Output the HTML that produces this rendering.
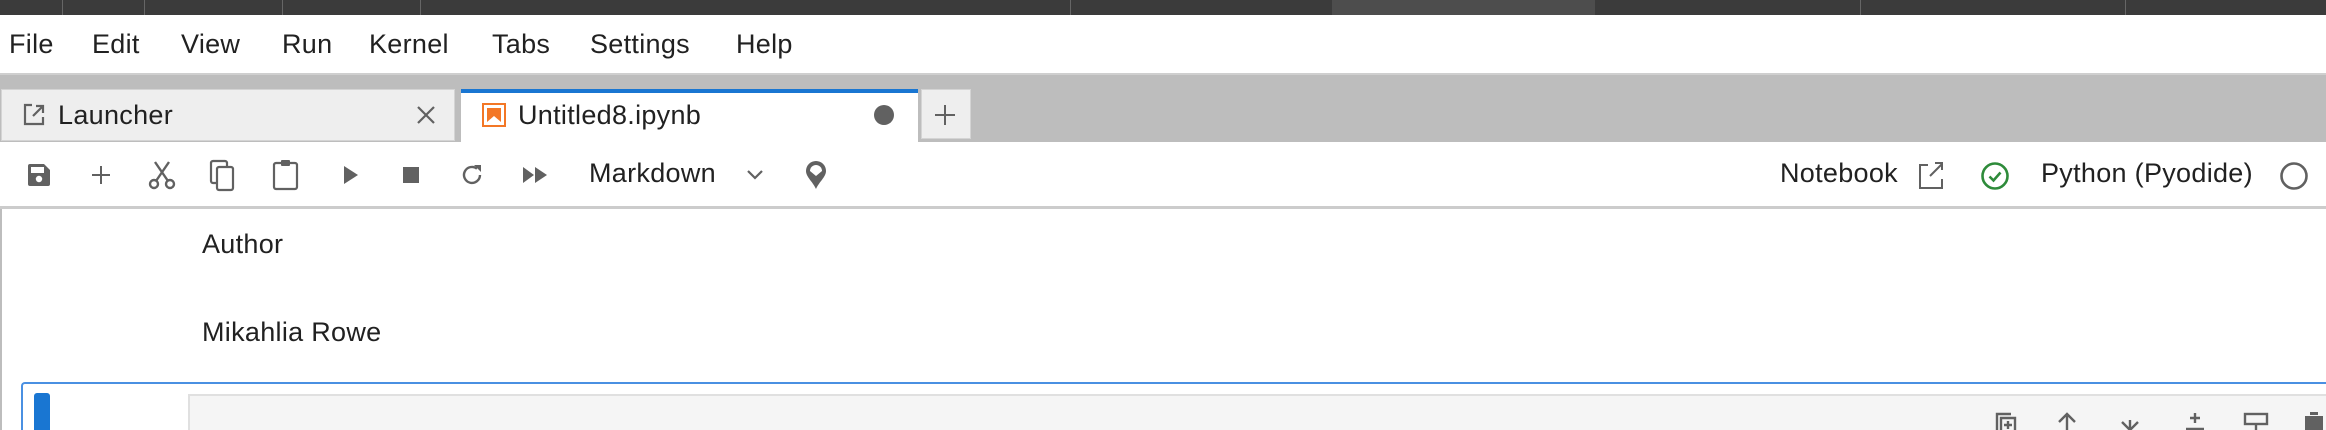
<!DOCTYPE html>
<html><head><meta charset="utf-8"><style>
*{margin:0;padding:0;box-sizing:border-box}
html{width:2326px;height:430px;overflow:hidden}
body{width:2326px;height:430px;overflow:hidden;background:#fff;font-family:"Liberation Sans",sans-serif;color:#212121;position:relative}
.a{position:absolute}
.t{font-size:27px;white-space:nowrap;line-height:1;letter-spacing:0.3px}
svg{position:absolute;overflow:visible}
</style></head><body>
<div class="a" style="left:0;top:0;width:2326px;height:15px;background:#3b3b3b"></div>
<div class="a" style="left:1332px;top:0;width:263px;height:15px;background:#4d4d4d"></div>
<div class="a" style="left:62px;top:0;width:1px;height:15px;background:#666"></div>
<div class="a" style="left:144px;top:0;width:1px;height:15px;background:#666"></div>
<div class="a" style="left:282px;top:0;width:1px;height:15px;background:#666"></div>
<div class="a" style="left:420px;top:0;width:1px;height:15px;background:#666"></div>
<div class="a" style="left:1070px;top:0;width:1px;height:15px;background:#666"></div>
<div class="a" style="left:1860px;top:0;width:1px;height:15px;background:#666"></div>
<div class="a" style="left:2125px;top:0;width:1px;height:15px;background:#666"></div>
<div class="a t" style="left:9px;top:31px">File</div>
<div class="a t" style="left:92px;top:31px">Edit</div>
<div class="a t" style="left:181px;top:31px">View</div>
<div class="a t" style="left:282px;top:31px">Run</div>
<div class="a t" style="left:369px;top:31px">Kernel</div>
<div class="a t" style="left:492px;top:31px">Tabs</div>
<div class="a t" style="left:590px;top:31px">Settings</div>
<div class="a t" style="left:736px;top:31px">Help</div>
<div class="a" style="left:0;top:73px;width:2326px;height:69px;background:#bdbdbd;border-top:2px solid #cfcfcf"></div>
<div class="a" style="left:1px;top:89px;width:454px;height:52px;background:#eeeeee;border:1px solid #d4d4d4"></div>
<svg style="left:22px;top:103px" width="24" height="24" viewBox="0 0 24 24"><path d="M10 2H3v19h18v-7" fill="none" stroke="#616161" stroke-width="2.2"/><path d="M11 13L21 3M14 3h7v7" fill="none" stroke="#616161" stroke-width="2.2"/></svg>
<div class="a t" style="left:58px;top:102px">Launcher</div>
<svg style="left:416px;top:105px" width="20" height="20"><path d="M2 2L18 18M18 2L2 18" stroke="#616161" stroke-width="2.2"/></svg>
<div class="a" style="left:461px;top:89px;width:457px;height:53px;background:#fff"></div>
<div class="a" style="left:461px;top:89px;width:457px;height:4px;background:#1976d2"></div>
<svg style="left:482px;top:103px" width="24" height="24"><rect x="1" y="1" width="22" height="22" fill="#fff" stroke="#f37726" stroke-width="2"/><path d="M5 5h14v14l-7-6-7 6z" fill="#f37726"/></svg>
<div class="a t" style="left:518px;top:102px">Untitled8.ipynb</div>
<div class="a" style="left:874px;top:105px;width:20px;height:20px;border-radius:50%;background:#616161"></div>
<div class="a" style="left:921px;top:89px;width:50px;height:50px;background:#eee;border:1px solid #d4d4d4"></div>
<svg style="left:934px;top:104px" width="22" height="22"><path d="M11 1v20M1 11h20" stroke="#616161" stroke-width="2"/></svg>
<div class="a" style="left:0;top:206px;width:2326px;height:3px;background:#cccccc"></div>
<svg style="left:28px;top:164px" width="22" height="22"><path d="M0 2a2 2 0 0 1 2-2h14l6 6v14a2 2 0 0 1-2 2H2a2 2 0 0 1-2-2z" fill="#616161"/><rect x="3" y="3" width="13" height="6" fill="#fff"/><circle cx="11" cy="15" r="3.2" fill="#fff"/></svg>
<svg style="left:90px;top:164px" width="22" height="22"><path d="M11 2v18M2 11h18" stroke="#616161" stroke-width="2"/></svg>
<svg style="left:148px;top:160px" width="28" height="30"><circle cx="6" cy="24" r="4" fill="none" stroke="#616161" stroke-width="2.4"/><circle cx="22" cy="24" r="4" fill="none" stroke="#616161" stroke-width="2.4"/><path d="M8 21L21 2M20 21L7 2" stroke="#616161" stroke-width="2.4"/></svg>
<svg style="left:210px;top:160px" width="26" height="32"><rect x="1" y="1" width="16" height="22" rx="2" fill="none" stroke="#616161" stroke-width="2.2"/><rect x="7" y="7" width="16" height="23" rx="2" fill="#fff" stroke="#616161" stroke-width="2.2"/></svg>
<svg style="left:273px;top:159px" width="26" height="32"><rect x="1" y="4" width="23" height="26" rx="2" fill="none" stroke="#616161" stroke-width="2.2"/><rect x="8" y="1" width="9" height="6" rx="1" fill="#616161"/></svg>
<svg style="left:343px;top:165px" width="16" height="20"><path d="M1 1L15 10L1 19z" fill="#616161"/></svg>
<div class="a" style="left:403px;top:167px;width:16px;height:16px;background:#616161"></div>
<svg style="left:461px;top:163px" width="24" height="24"><path d="M19 12a8 8 0 1 1-3-6.3" fill="none" stroke="#616161" stroke-width="2.4"/><path d="M13 2h7v7z" fill="#616161"/></svg>
<svg style="left:522px;top:166px" width="26" height="18"><path d="M1 1L12 9L1 17zM13 1L25 9L13 17z" fill="#616161"/></svg>
<div class="a t" style="left:589px;top:160px">Markdown</div>
<svg style="left:747px;top:170px" width="16" height="10"><path d="M1 1l7 7 7-7" fill="none" stroke="#616161" stroke-width="2.2"/></svg>
<svg style="left:805px;top:160px" width="22" height="30"><path d="M11 29C8 22 1 17 1 11a10 10 0 0 1 20 0c0 6-7 11-10 18z" fill="#616161"/><path d="M5 11a6 6 0 0 1 12 0l-6 5z" fill="#fff"/></svg>
<div class="a t" style="left:1780px;top:160px">Notebook</div>
<svg style="left:1918px;top:161px" width="26" height="28"><path d="M10 4H2v23h22v-9" fill="none" stroke="#616161" stroke-width="2"/><path d="M12 15L24 3M17 2h7v7" fill="none" stroke="#616161" stroke-width="2"/></svg>
<svg style="left:1980px;top:161px" width="30" height="30"><circle cx="15" cy="15" r="12.5" fill="none" stroke="#2e8b3a" stroke-width="2.6"/><path d="M9.5 15.5l4 4 7-8" fill="none" stroke="#2e8b3a" stroke-width="2.6"/></svg>
<div class="a t" style="left:2041px;top:160px">Python (Pyodide)</div>
<svg style="left:2279px;top:161px" width="30" height="30"><circle cx="15" cy="15" r="12.5" fill="none" stroke="#616161" stroke-width="2.6"/></svg>
<div class="a" style="left:0;top:209px;width:2px;height:221px;background:#bdbdbd"></div>
<div class="a t" style="left:202px;top:231px">Author</div>
<div class="a t" style="left:202px;top:319px">Mikahlia Rowe</div>
<div class="a" style="left:21px;top:382px;width:2305px;height:48px;border-top:2px solid #4a90e2;border-left:2px solid #4a90e2;border-top-left-radius:4px"></div>
<div class="a" style="left:34px;top:393px;width:16px;height:37px;background:#1976d2;border-radius:3px 3px 0 0"></div>
<div class="a" style="left:188px;top:394px;width:2138px;height:36px;background:#f5f5f5;border-top:2px solid #e0e0e0;border-left:2px solid #e0e0e0"></div>
<div class="a" style="left:0;top:0;width:2326px;height:430px;overflow:hidden;pointer-events:none">
<svg style="left:1995px;top:410px" width="340" height="22">
<g fill="none" stroke="#616161" stroke-width="2.4"><path d="M2 20V4h14M6 20V8h14v12"/><path d="M13 11v8M9 15h8"/>
<path d="M72 22V6M64 12l8-8 8 8"/><path d="M135 22V10M127 12l8 8 8-8"/><path d="M200 3v10M195 8h10M191 19h18"/>
<rect x="250" y="4" width="22" height="10"/><path d="M261 14v8"/></g>
<rect x="310" y="6" width="18" height="16" fill="#616161"/><rect x="315" y="2" width="8" height="3" fill="#616161"/></svg>
</div>
</body></html>
